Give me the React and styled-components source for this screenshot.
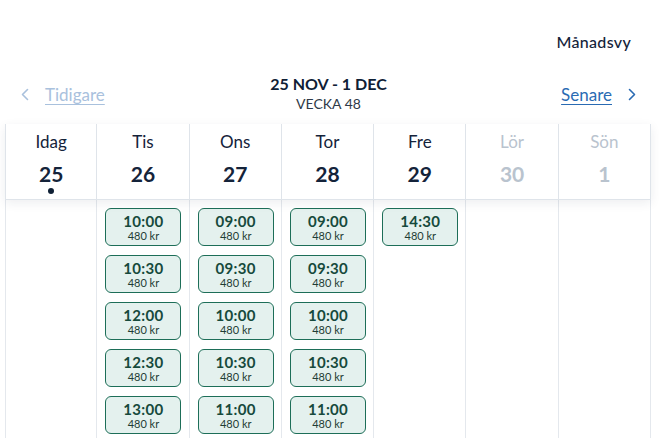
import React from 'react';
import styled, { createGlobalStyle } from 'styled-components';

const GlobalStyle = createGlobalStyle`
  body {
    margin: 0;
    background: #ffffff;
    font-family: 'Lato', 'Open Sans', sans-serif;
    color: #0f2035;
    overflow: hidden;
  }
`;

const Page = styled.div`
  width: 659px;
  height: 438px;
  overflow: hidden;
`;

const TopBar = styled.div`
  display: flex;
  justify-content: flex-end;
  padding: 32px 28px 0 0;
  height: 30px;
`;

const ViewLink = styled.span`
  font-size: 16px;
  font-weight: 500;
  color: #14233a;
  letter-spacing: 0.3px;
`;

const NavRow = styled.div`
  display: grid;
  grid-template-columns: 1fr auto 1fr;
  align-items: center;
  padding: 0 23px 0 21px;
  height: 62px;
`;

const NavLink = styled.a`
  display: flex;
  align-items: center;
  gap: 16px;
  justify-self: ${p => (p.right ? 'end' : 'start')};
  margin-top: 3px;
  font-size: 17px;
  color: ${p => (p.disabled ? '#a9c1dd' : '#2a6bb3')};
  text-decoration: underline;
  text-underline-offset: 3px;
  cursor: pointer;
`;

const WeekTitle = styled.div`
  display: flex;
  flex-direction: column;
  align-items: center;
  padding-top: 2px;
`;

const Range = styled.div`
  font-size: 16px;
  font-weight: 700;
  color: #0f2035;
  line-height: 20px;
`;

const WeekNo = styled.div`
  font-size: 14px;
  color: #2f3a48;
  line-height: 20px;
`;

const Calendar = styled.div`
  margin-left: 5px;
  width: 646px;
`;

const HeaderRow = styled.div`
  display: grid;
  grid-template-columns: repeat(7, 1fr);
  background: #ffffff;
  box-shadow: 0 3px 10px rgba(20, 35, 58, 0.08);
  border-bottom: 1px solid #dfe4ea;
  position: relative;
  z-index: 1;
`;

const DayHead = styled.div`
  height: 75px;
  border-right: 1px solid #dfe4ea;
  border-left: ${p => (p.first ? '1px solid #dfe4ea' : 'none')};
  display: flex;
  flex-direction: column;
  align-items: center;
  color: ${p => (p.muted ? '#b9c3ce' : '#14233a')};
`;

const DayName = styled.div`
  font-size: 17px;
  margin-top: 7px;
  line-height: 22px;
`;

const DayNum = styled.div`
  font-size: 21px;
  font-weight: 700;
  margin-top: 8px;
  line-height: 26px;
`;

const TodayDot = styled.div`
  width: 6px;
  height: 6px;
  border-radius: 50%;
  background: #0f2035;
  margin-top: 1px;
`;

const Body = styled.div`
  display: grid;
  grid-template-columns: repeat(7, 1fr);
  height: 260px;
`;

const DayCol = styled.div`
  border-right: 1px solid #e4e8ed;
  border-left: ${p => (p.first ? '1px solid #e4e8ed' : 'none')};
  display: flex;
  flex-direction: column;
  align-items: center;
  gap: 9px;
  padding-top: 8px;
`;

const Slot = styled.button`
  width: 76px;
  height: 38px;
  box-sizing: border-box;
  border: 1px solid #1d6e58;
  border-radius: 6px;
  background: #e4f1ee;
  display: flex;
  flex-direction: column;
  align-items: center;
  justify-content: center;
  padding: 0;
  margin-left: 1px;
  font-family: inherit;
  color: #164a3c;
  cursor: pointer;
`;

const SlotTime = styled.span`
  font-size: 15px;
  font-weight: 700;
  line-height: 16px;
  letter-spacing: 0.3px;
`;

const SlotPrice = styled.span`
  font-size: 11px;
  line-height: 13px;
  color: #1f3d35;
`;

const Chevron = ({ dir, color }) => (
  <svg width="8" height="13" viewBox="0 0 8 13" fill="none">
    <path
      d={dir === 'left' ? 'M6.5 1.5 L1.5 6.5 L6.5 11.5' : 'M1.5 1.5 L6.5 6.5 L1.5 11.5'}
      stroke={color}
      strokeWidth="1.6"
      strokeLinecap="round"
      strokeLinejoin="round"
    />
  </svg>
);

const days = [
  { name: 'Idag', num: 25, today: true, slots: [] },
  { name: 'Tis', num: 26, slots: ['10:00', '10:30', '12:00', '12:30', '13:00'] },
  { name: 'Ons', num: 27, slots: ['09:00', '09:30', '10:00', '10:30', '11:00'] },
  { name: 'Tor', num: 28, slots: ['09:00', '09:30', '10:00', '10:30', '11:00'] },
  { name: 'Fre', num: 29, slots: ['14:30'] },
  { name: 'Lör', num: 30, muted: true, slots: [] },
  { name: 'Sön', num: 1, muted: true, slots: [] },
];

export default function App() {
  return (
    <Page>
      <GlobalStyle />
      <TopBar>
        <ViewLink>Månadsvy</ViewLink>
      </TopBar>
      <NavRow>
        <NavLink disabled>
          <Chevron dir="left" color="#a9c1dd" />
          Tidigare
        </NavLink>
        <WeekTitle>
          <Range>25 NOV - 1 DEC</Range>
          <WeekNo>VECKA 48</WeekNo>
        </WeekTitle>
        <NavLink right>
          Senare
          <Chevron dir="right" color="#2a6bb3" />
        </NavLink>
      </NavRow>
      <Calendar>
        <HeaderRow>
          {days.map((d, i) => (
            <DayHead key={d.name} first={i === 0} muted={d.muted}>
              <DayName>{d.name}</DayName>
              <DayNum>{d.num}</DayNum>
              {d.today && <TodayDot />}
            </DayHead>
          ))}
        </HeaderRow>
        <Body>
          {days.map((d, i) => (
            <DayCol key={d.name} first={i === 0}>
              {d.slots.map(t => (
                <Slot key={t}>
                  <SlotTime>{t}</SlotTime>
                  <SlotPrice>480 kr</SlotPrice>
                </Slot>
              ))}
            </DayCol>
          ))}
        </Body>
      </Calendar>
    </Page>
  );
}
